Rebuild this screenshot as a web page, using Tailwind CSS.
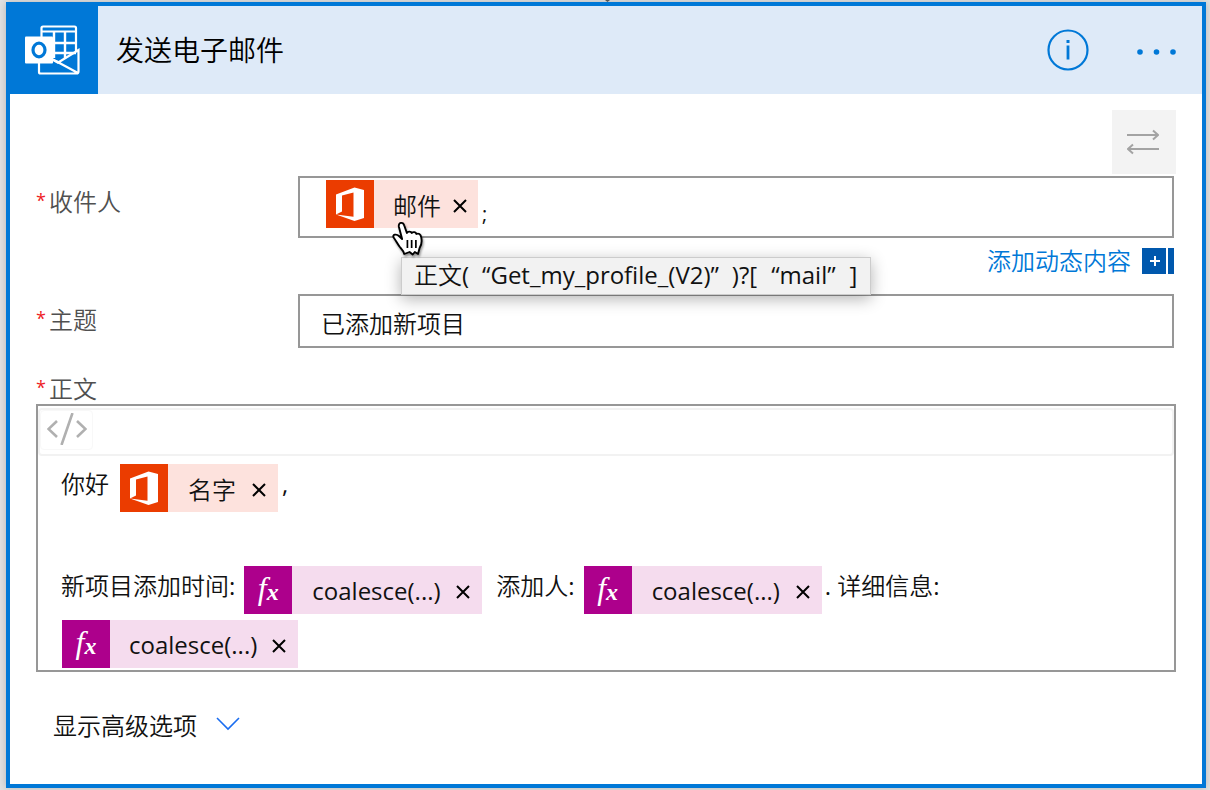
<!DOCTYPE html>
<html lang="zh-CN">
<head>
<meta charset="utf-8">
<title>发送电子邮件</title>
<script src="https://cdn.jsdelivr.net/npm/@tailwindcss/browser@4"></script>
</head>
<body class="min-h-screen bg-[#e2e2e2] font-['Open_Sans','Noto_Sans_CJK_SC',sans-serif] text-2xl leading-8 text-[#111]">
<svg class="hidden" aria-hidden="true">
  <symbol id="office" viewBox="0 0 48 48">
    <path fill="#fff" d="M10 14.500 28.500 7.500 38 10v28l-9.500 3L10 34.500l17.500 2.200V12.500l-11.500 3v16L10 34.500Z"/>
  </symbol>
  <symbol id="cross" viewBox="0 0 14 14">
    <path d="M1 1l12 12M13 1 1 13" fill="none" stroke="#000" stroke-width="2"/>
  </symbol>
</svg>
<main class="relative flex min-h-screen px-1 pl-[6px] pt-[2px] pb-[2px]">
  <svg class="absolute left-1/2 top-0 h-[2px] w-2" viewBox="0 0 8 2" aria-hidden="true"><path d="M0 0h5L2.500 2Z" fill="#555"/></svg>
  <section class="flex grow flex-col border-4 border-[#0078d7] bg-white shadow-[0_0_8px_rgba(0,0,0,0.2)]">
    <header class="flex h-22 items-center bg-[#deeaf8]">
      <div class="-ml-1 flex h-22 w-23 items-center bg-[#0078d7] pl-[19px]">
        <svg class="h-[50px] w-[55px]" viewBox="0 0 55 50" fill="none" stroke="#fff" stroke-width="2" aria-hidden="true">
          <path d="M16.500 12V3q0-1.500 1.500-1.500h31.500q1.500 0 1.500 1.500v24M17 6.500h34" stroke-width="2.200"/>
          <path d="M29 7v26M40 7v26M17 18h34M17 28h34" stroke-width="2.400"/>
          <path d="M14 37v10q0 1.500 1.500 1.500h36q2 0 2-2V25L34 37M27 34 53 48" stroke-width="2.200"/>
          <path d="M26 33l10 4-3 2-7-4Z" fill="#fff" stroke="none"/>
          <rect x="0" y="11.500" width="28" height="27" rx="1" fill="#fff" stroke="none"/>
          <ellipse cx="14" cy="25" rx="6" ry="6.800" stroke="#0078d7" stroke-width="3.200"/>
        </svg>
      </div>
      <h1 class="grow pl-[18px] text-[28px] leading-10 font-[350] text-black">发送电子邮件</h1>
      <button type="button" aria-label="信息" class="mr-12">
        <svg class="block h-[42px] w-[42px]" viewBox="0 0 42 42" fill="none" stroke="#0078d7"><circle cx="21" cy="21" r="19.500" stroke-width="2.200"/><path d="M21 16.500V30.500" stroke-width="2.800"/><path d="M21 11v3" stroke-width="3"/></svg>
      </button>
      <button type="button" aria-label="更多" class="mr-[25px] pt-px">
        <svg class="block h-6 w-10" viewBox="0 0 40 24" fill="#0078d7"><circle cx="3" cy="13" r="2.800"/><circle cx="19.500" cy="13" r="2.800"/><circle cx="36" cy="13" r="2.800"/></svg>
      </button>
    </header>
    <div class="flex flex-col px-[26px] pt-4">
      <button type="button" aria-label="切换模式" class="flex size-16 items-center justify-center self-end bg-[#f3f3f3] pr-[2px]">
        <svg class="h-7 w-8" viewBox="0 0 32 28" fill="none" stroke="#a3a3a3" stroke-width="2"><path d="M0 7h31M26 2.500l5 4.500-5 4.500M32 21H1M6 16.500 1 21l5 4.500"/></svg>
      </button>
      <div class="mt-[2px] mr-[2px] flex">
        <div id="to-label" class="flex w-[262px] shrink-0 gap-[3px] pt-[10px] font-[350] text-[#505050]"><span class="font-normal text-[#ee1c25] text-lg">*</span>收件人</div>
        <div role="textbox" aria-labelledby="to-label" class="relative flex h-[62px] grow border-2 border-[#979797] pt-[2px] pl-[26px]">
          <span class="flex h-12 items-center bg-[#fde2dd]">
            <svg class="size-12 bg-[#eb3c00]" aria-hidden="true"><use href="#office"/></svg>
            <span class="pt-1 pl-[19px] font-[350]">邮件</span>
            <button type="button" aria-label="删除邮件" class="pt-1 pr-[11px] pl-3"><svg class="block size-[14px]"><use href="#cross"/></svg></button>
          </span>
          <span class="pt-5 pl-1 text-xl">;</span>
          <svg class="absolute top-[43px] left-[91px] z-20 h-[36px] w-[36px] drop-shadow-[1px_2px_1px_rgba(0,0,0,0.4)]" viewBox="0 0 34 36" preserveAspectRatio="none" aria-hidden="true">
            <path d="M12.500 33c-.5-3-2.500-5-4.500-7.500-2-3-3.500-6-5.500-9-1.500-3 2.500-4 5-1.500l3 3L7.500 6c-1-5 4-5.500 5-1.500l2.500 7.500c1-2 4-1.500 4.500 0 1.500-1.500 4-1 4.500 1 2-1 4 0 4.500 3 .8 4 .5 8-1.500 11l-1.500 6-3-2-2 2.500-3-2.500Z" fill="#fff" stroke="#000" stroke-width="1.800" stroke-linejoin="round"/>
            <path d="M15.500 19v8M19.500 19v8M23.500 19v8" stroke="#000" stroke-width="1.600"/>
          </svg>
          <div role="tooltip" class="absolute top-[79px] left-[101px] z-10 h-[38px] w-[470px] border border-[#ccc] bg-[#f2f2f2] pl-3 leading-[34px] font-[350] whitespace-nowrap shadow-[0_4px_16px_rgba(0,0,0,0.3)]">正文<span class="font-normal">(<span class="pl-[13px]">“Get_my_profile_(V2)”</span><span class="pl-[13px]">)?[</span><span class="pl-[14px]">“mail”</span><span class="pl-[14px]">]</span></span></div>
        </div>
      </div>
      <div class="mr-[2px] flex h-14 items-center justify-end gap-[11px] pb-[10px]">
        <a href="#" class="font-[350] text-[#0078d7]">添加动态内容</a>
        <button type="button" aria-label="添加"><svg class="block h-[26px] w-8" viewBox="0 0 32 26"><path d="M0 0h24v26H0zM26 0h6v26h-6z" fill="#0058ad"/><path d="M8 13h10M13 8v10" stroke="#fff" stroke-width="2"/></svg></button>
      </div>
      <div class="mr-[2px] flex">
        <label for="subject" class="flex w-[262px] shrink-0 gap-[3px] pt-[10px] font-[350] text-[#505050]"><span class="font-normal text-[#ee1c25] text-lg">*</span>主题</label>
        <input id="subject" type="text" value="已添加新项目" class="h-[54px] min-w-0 grow border-2 border-[#979797] pt-[2px] pl-[21px] font-[350]">
      </div>
      <div id="body-label" class="mt-[25px] -mb-px flex gap-[3px] font-[350] text-[#505050]"><span class="font-normal text-[#ee1c25] text-lg">*</span>正文</div>
      <div class="h-[268px] border-2 border-[#979797]">
        <div class="mt-[2px] h-12 rounded-sm border-2 border-[#f2f2f2]">
          <button type="button" aria-label="代码视图" class="flex h-10 w-[53px] items-center justify-center rounded-sm border border-[#f8f8f8] pb-[2px]">
            <svg class="h-8 w-10" viewBox="0 0 40 32" fill="none" stroke="#b0b0b0" stroke-width="2.600"><path d="M10 8 1.500 16l8.500 8M30 8l8.500 8-8.500 8M25.500 0l-11 32"/></svg>
          </button>
        </div>
        <div role="textbox" aria-multiline="true" aria-labelledby="body-label" class="pt-2 pl-[23px] font-[350]">
          <p class="flex h-12 items-center">
            <span class="pr-[11px] pb-2">你好</span>
            <span class="flex h-12 items-center bg-[#fde2dd]">
              <svg class="size-12 bg-[#eb3c00]" aria-hidden="true"><use href="#office"/></svg>
              <span class="pt-1 pl-5">名字</span>
              <button type="button" aria-label="删除名字" class="pt-1 pr-3 pl-4"><svg class="block size-[14px]"><use href="#cross"/></svg></button>
            </span>
            <span class="pb-2 pl-1 font-normal">,</span>
          </p>
          <p class="mt-[54px] flex h-12 items-center">
            <span class="pr-[9px] pb-2">新项目添加时间<span class="font-normal">:</span></span>
            <span class="flex h-12 w-[238px] items-center bg-[#f5dcee]">
              <span class="flex size-12 items-center justify-center bg-[#ad008c] pb-1 font-['Liberation_Serif',serif] text-[32px] font-normal text-white italic">f<span class="pt-2 text-2xl font-bold">x</span></span>
              <span class="pt-[2px] pl-5 font-normal">coalesce(...)</span>
              <button type="button" aria-label="删除" class="ml-auto pt-1 pr-3"><svg class="block size-[14px]"><use href="#cross"/></svg></button>
            </span>
            <span class="pr-[9px] pb-2 pl-[14px]">添加人<span class="font-normal">:</span></span>
            <span class="flex h-12 w-[238px] items-center bg-[#f5dcee]">
              <span class="flex size-12 items-center justify-center bg-[#ad008c] pb-1 font-['Liberation_Serif',serif] text-[32px] font-normal text-white italic">f<span class="pt-2 text-2xl font-bold">x</span></span>
              <span class="pt-[2px] pl-5 font-normal">coalesce(...)</span>
              <button type="button" aria-label="删除" class="ml-auto pt-1 pr-3"><svg class="block size-[14px]"><use href="#cross"/></svg></button>
            </span>
            <span class="pb-2 pl-[3px]"><span class="font-normal">.</span> 详细信息<span class="font-normal">:</span></span>
          </p>
          <p class="mt-[6px] flex h-12 items-center pl-px">
            <span class="flex h-12 w-[236px] items-center bg-[#f5dcee]">
              <span class="flex size-12 items-center justify-center bg-[#ad008c] pb-1 font-['Liberation_Serif',serif] text-[32px] font-normal text-white italic">f<span class="pt-2 text-2xl font-bold">x</span></span>
              <span class="pt-[2px] pl-[19px] font-normal">coalesce(...)</span>
              <button type="button" aria-label="删除" class="ml-auto pt-1 pr-3"><svg class="block size-[14px]"><use href="#cross"/></svg></button>
            </span>
          </p>
        </div>
      </div>
      <button type="button" class="mt-[38px] flex items-center gap-[19px] self-start pl-[17px] font-[350]">显示高级选项
        <svg class="h-5 w-6 pb-1" viewBox="0 0 24 16" fill="none" stroke="#1a6df0" stroke-width="1.600" aria-hidden="true"><path d="M1 2l11 11L23 2"/></svg>
      </button>
    </div>
  </section>
</main>
</body>
</html>
